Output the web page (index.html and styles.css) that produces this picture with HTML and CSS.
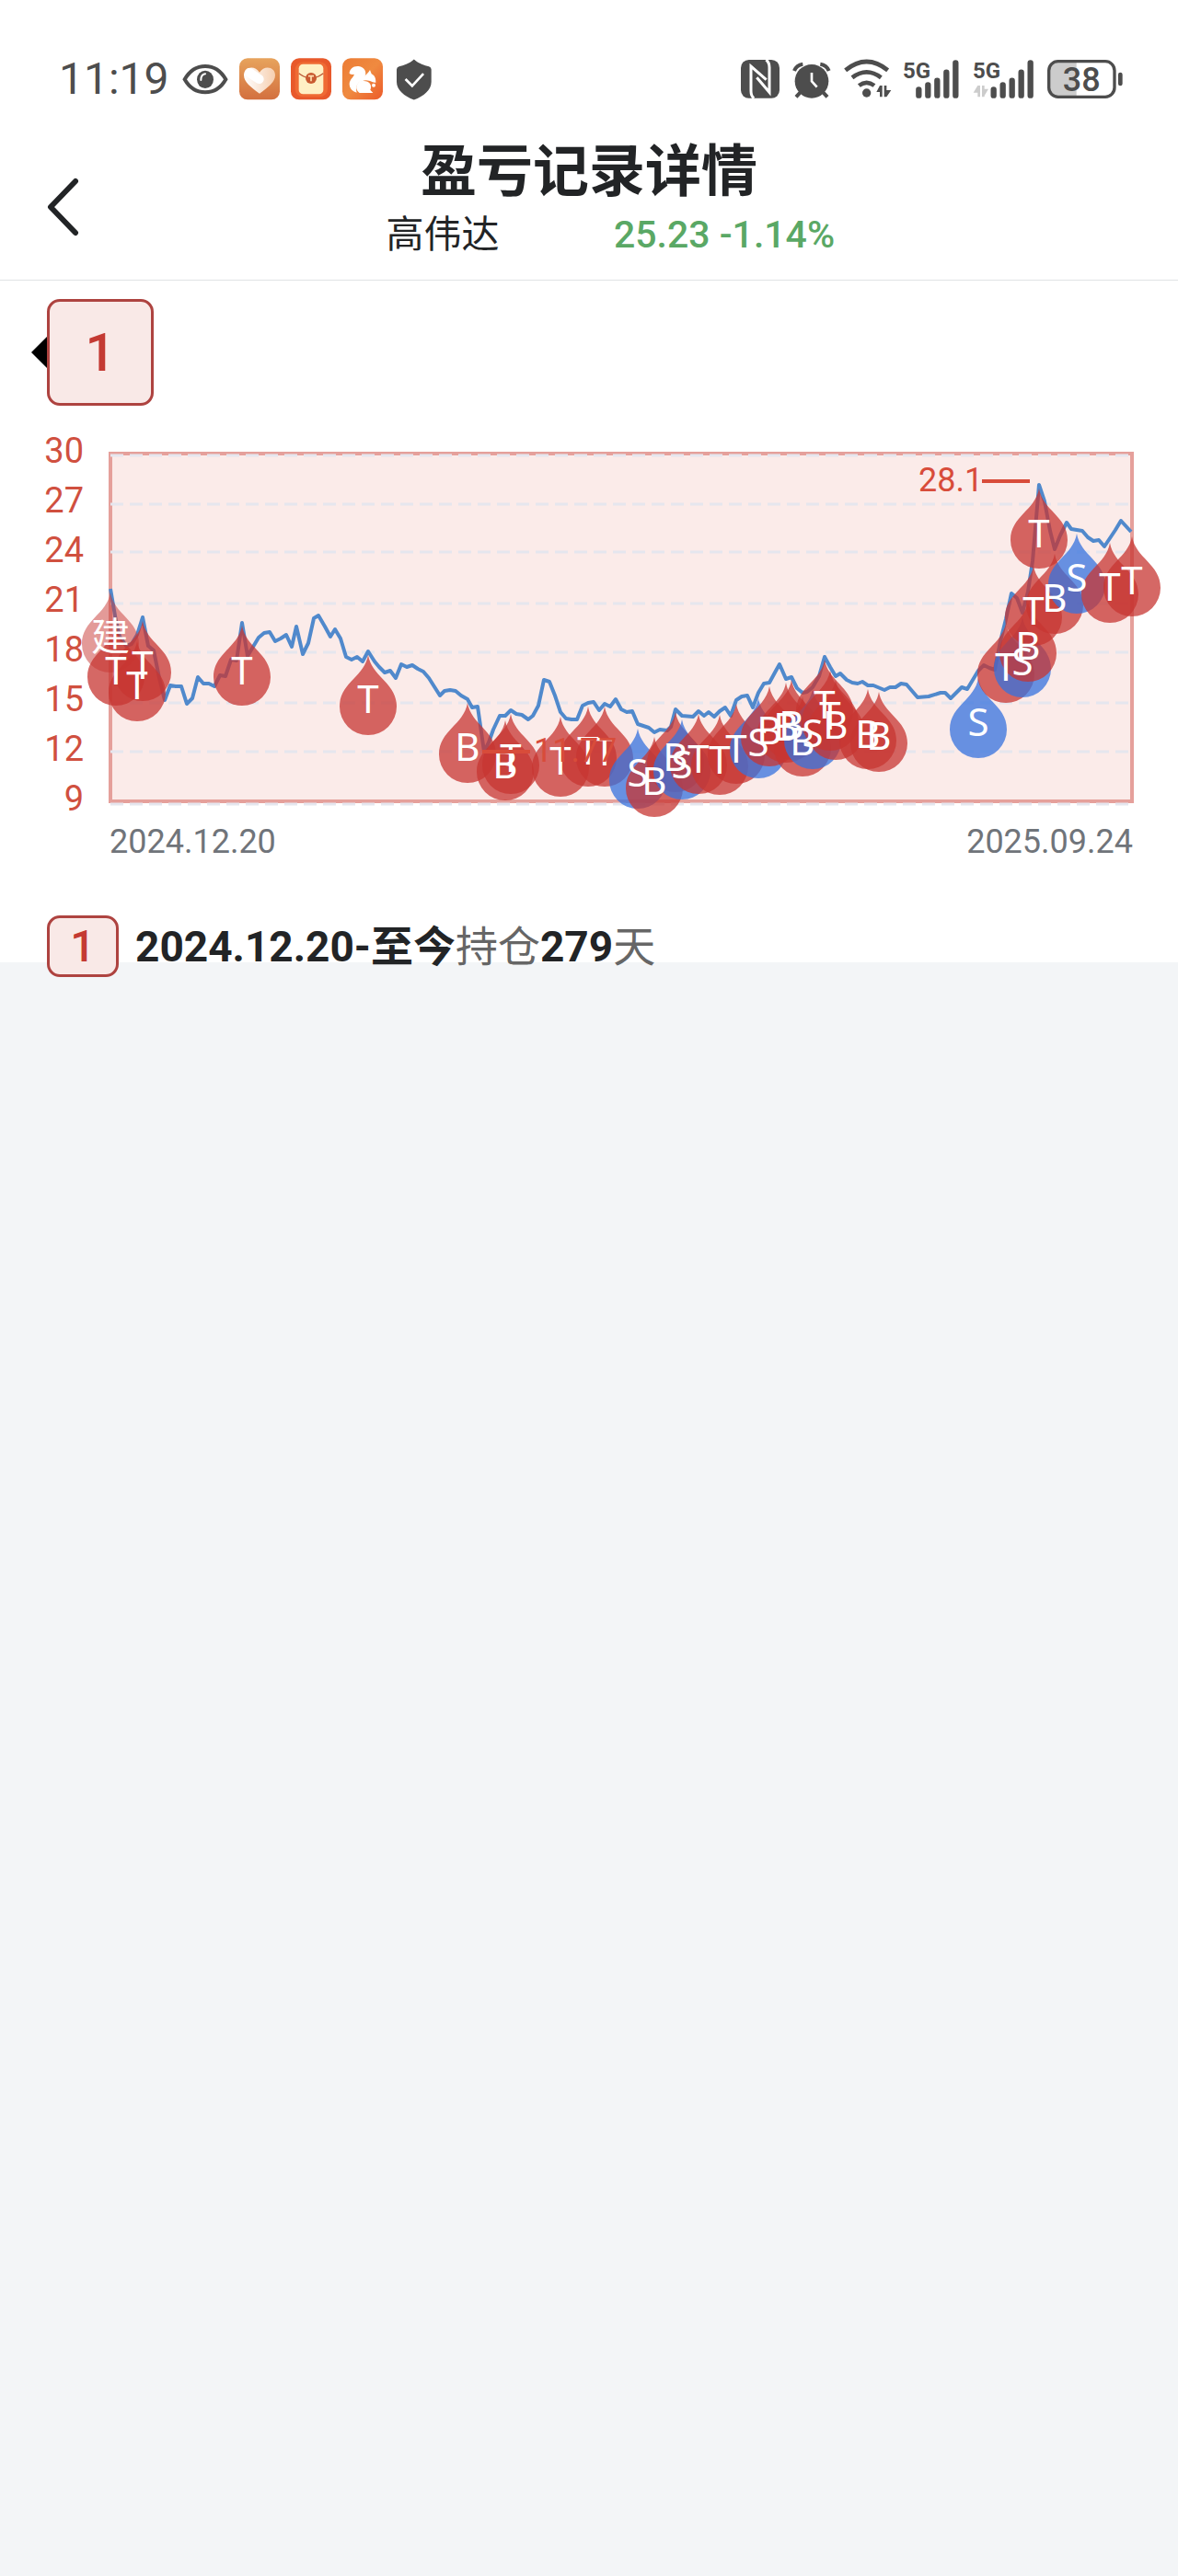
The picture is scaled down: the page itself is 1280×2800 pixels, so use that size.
FILE: index.html
```html
<!DOCTYPE html>
<html lang="zh-CN">
<head>
  <meta charset="UTF-8">
  <meta name="viewport" content="width=device-width, initial-scale=1.0">
  <title>盈亏记录详情</title>
  <link rel="stylesheet" href="styles.css">
</head>
<body>
  <div class="status-bar">
    <div class="status-left">
      <span class="clock">11:19</span>
      <svg class="eye" width="50" height="34" viewBox="0 0 150 102">
        <path d="M8 52C25 22 48 9 75 9s50 13 67 43c-17 30-40 42-67 42S25 82 8 52z" fill="none" stroke="#4d4d4d" stroke-width="12"/>
        <ellipse cx="75" cy="52" rx="27" ry="29" fill="#4d4d4d"/>
        <path d="M61 54c0-13 5-19 14-20" fill="none" stroke="#fff" stroke-width="6" stroke-linecap="round"/>
      </svg>
      <svg width="44" height="46" viewBox="0 0 132 136">
        <defs>
          <linearGradient id="heartBg" x2="0" y2="1"><stop stop-color="#e7a35c"/><stop offset="1" stop-color="#d3703f"/></linearGradient>
          <linearGradient id="heartFill"><stop stop-color="#fff"/><stop offset="1" stop-color="#f6cfb0"/></linearGradient>
        </defs>
        <rect width="132" height="135" rx="27" fill="url(#heartBg)"/>
        <path d="M66 115C38 94 15 77 15 55c0-28 36-34 51-9 15-25 51-19 51 9 0 22-23 39-51 60z" fill="url(#heartFill)"/>
        <path d="M33 47l32 21" stroke="#fff" stroke-width="30" stroke-linecap="round"/>
      </svg>
      <svg width="44" height="46" viewBox="0 0 132 136">
        <rect width="132" height="135" rx="27" fill="#e8592b"/>
        <rect x="14" y="12" width="106" height="114" rx="26" fill="#ef6a34"/>
        <rect x="26" y="19" width="80" height="98" rx="14" fill="#fff0c4"/>
        <path d="M26 49q22 16 40 16t40-16" fill="none" stroke="#b95532" stroke-width="4"/>
        <circle cx="66" cy="65" r="18" fill="#c95a30"/>
        <path d="M57 58h18M66 58v17" stroke="#ffe0b0" stroke-width="5"/>
      </svg>
      <svg width="44" height="46" viewBox="0 0 132 136">
        <defs><linearGradient id="uc" y2="1"><stop stop-color="#ec7c35"/><stop offset=".5" stop-color="#ef8a40"/><stop offset="1" stop-color="#ec5a2a"/></linearGradient></defs>
        <rect width="132" height="135" rx="27" fill="url(#uc)"/>
        <path d="M23 50c0-16 14-26 30-24 20 3 28 20 20 34-8 13-28 21-28 38 0 6 1 9 2 14-15-3-24-15-24-28 0-15 13-21 16-32-5 2-11 1-16-2z" fill="#fff"/>
        <path d="M90 38l5 13c10 5 14 13 14 28-8 1-14-4-22-6-13-4-26 0-34 12 2-24 27-26 37-47z" fill="#fff"/>
        <path d="M69 74c20 0 29 15 22 29l9 10H56C37 99 46 74 69 74z" fill="#fff"/>
        <circle cx="102" cy="88" r="6" fill="#fff"/>
      </svg>
      <svg class="shield" width="38" height="45" viewBox="0 0 115 135">
        <path d="M57 1c17 15 34 20 49 23q8 2 8 10v41c0 27-25 47-57 59C25 122 0 102 0 75V34q0-8 8-10C23 21 40 16 57 1z" fill="#4d4d4d"/>
        <path d="M29 66l22 22 37-40" fill="none" stroke="#fff" stroke-width="8"/>
      </svg>
    </div>
    <div class="status-right">
      <svg width="42" height="42" viewBox="0 0 126 126">
        <rect width="126" height="125" rx="26" fill="#4d4d4d"/>
        <path d="M43 125Q33 119 33 102V21l50 44M82 0q11 8 11 25v81L52 58" fill="none" stroke="#fff" stroke-width="9"/>
      </svg>
      <svg width="42" height="42" viewBox="0 0 126 126">
        <g fill="none" stroke="#4d4d4d" stroke-width="12">
          <path d="M6 36Q13 17 34 14M119 36Q112 17 91 14M28 104l-16 17M98 104l16 17"/>
        </g>
        <circle cx="63" cy="70" r="55" fill="#4d4d4d"/>
        <path d="M63 42v28l17 19" fill="none" stroke="#fff" stroke-width="8"/>
      </svg>
      <svg width="50" height="42" viewBox="0 0 150 126">
        <g fill="none" stroke="#4d4d4d" stroke-width="14">
          <path d="M5 34Q74-22 143 34M27 58Q74 22 121 58M49 84Q74 65 99 84"/>
        </g>
        <circle cx="74" cy="108" r="14" fill="#4d4d4d"/>
        <path d="M117 84v37h8V84zM106 105l11-21v21zM131 84v37h8V84zM139 121V99h15z" fill="#4d4d4d"/>
      </svg>
      <svg width="62" height="42" viewBox="0 0 186 126">
        <text class="net" x="0" y="60">5G</text>
        <path d="M52 97v19M82 82v34M112 68v48M142 41v75M172 10v106" stroke="#4d4d4d" stroke-width="19" stroke-linecap="round"/>
      </svg>
      <svg width="67" height="42" viewBox="0 0 201 126">
        <text class="net" x="0" y="60">5G</text>
        <path d="M16 84v37h8V84zM2 107l14-23v23zM30 84v37h8V84zM38 117V95h13z" fill="#ccc"/>
        <path d="M68 97v19M98 82v34M128 68v48M158 41v75M188 10v106" stroke="#4d4d4d" stroke-width="19" stroke-linecap="round"/>
      </svg>
      <svg class="battery" width="84" height="42" viewBox="0 0 252 126">
        <path d="M30 4h65v117H30Q4 118 4 94V30Q4 6 30 4z" fill="#ccc"/>
        <rect x="5" y="5" width="214" height="116" rx="30" fill="none" stroke="#4d4d4d" stroke-width="10"/>
        <path d="M238 48v30" stroke="#4d4d4d" stroke-width="14" stroke-linecap="round"/>
        <text class="level" x="112" y="101">38</text>
      </svg>
    </div>
  </div>

  <header class="page-header">
    <button class="back" type="button" aria-label="返回">
      <svg width="36" height="64" viewBox="0 0 36 64"><path d="M32 4L5 32l27 28" fill="none" stroke="#222426" stroke-width="6" stroke-linecap="round" stroke-linejoin="round"/></svg>
    </button>
    <div class="heading">
      <h1>盈亏记录详情</h1>
      <div class="stock">
        <span>高伟达</span>
        <span class="price">25.23 -1.14%</span>
      </div>
    </div>
  </header>

  <main>
    <button class="tab" type="button">1</button>

    <svg class="chart" viewBox="0 460 1280 490" role="img" aria-label="2024.12.20 - 2025.09.24">
      <defs>
        <path id="pin" d="M0-56C4-32 31-26 31 0A31 31 0 0 1-31 0C-31-26-4-32 0-56z"/>
      </defs>
      <rect class="frame" x="120" y="493" width="1110" height="378"/>
      <path class="grid" d="M120 495H1228M120 548H1228M120 600H1228M120 656H1228M120 709H1228M120 764H1228M120 817H1228M120 874H1228"/>

      <g class="axis-y">
        <text x="91" y="503">30</text>
        <text x="91" y="557">27</text>
        <text x="91" y="611">24</text>
        <text x="91" y="665">21</text>
        <text x="91" y="719">18</text>
        <text x="91" y="773">15</text>
        <text x="91" y="827">12</text>
        <text x="91" y="881">9</text>
      </g>
      <g class="axis-x">
        <text x="119" y="927">2024.12.20</text>
        <text class="end" x="1231" y="927">2025.09.24</text>
      </g>

      <polyline class="line" points="120,640 126,675 130,692 137,702 143,700 149,690 155,671 161,702 167,707 173,737 179,761 185,745 191,746 197,746 203,765 209,759 215,736 221,743 227,743 233,746 239,734 245,735 251,717 257,718 263,677 269,713 275,703 281,693 287,688 293,687 299,697 305,694 311,690 317,703 322,681 329,711 335,699 341,672 346,669 353,681 359,692 364,684 370,694 376,714 382,717 388,714 394,719 400,708 407,719 412,725 418,731 424,729 430,737 436,722 442,725 448,723 454,727 460,730 466,737 478,756 483,751 489,750 495,751 501,756 508,760 513,769 519,768 526,817 531,807 536,793 543,778 549,778 555,772 561,776 567,777 574,782 579,778 585,767 591,739 597,741 603,756 609,774 615,781 621,782 627,782 633,767 639,764 645,763 651,772 657,765 663,768 669,760 675,771 681,774 687,773 693,787 699,789 705,791 711,796 717,793 725,794 729,790 734,771 741,778 753,779 759,773 765,778 770,774 776,779 782,773 788,769 794,778 800,761 806,757 812,756 818,769 824,753 830,743 836,742 842,731 847,722 854,738 860,736 866,748 872,753 877,752 883,747 890,735 896,714 902,725 908,735 913,732 920,739 926,742 932,743 937,741 943,745 949,745 961,750 967,747 973,747 979,743 985,744 997,758 1009,757 1022,753 1027,753 1033,759 1039,753 1045,747 1051,749 1057,739 1063,729 1069,723 1075,726 1081,728 1087,697 1093,673 1099,645 1105,650 1111,666 1117,643 1122,610 1129,527 1135,545 1141,577 1146,597 1152,582 1159,568 1164,575 1176,577 1182,584 1188,588 1194,587 1200,594 1206,585 1212,576 1218,566 1229,578"/>

      <!-- trade markers -->
      <g class="pins">
        <use class="open" href="#pin" x="120" y="700"/>
        <use href="#pin" x="126" y="736"/>
        <use href="#pin" x="149" y="753"/>
        <use href="#pin" x="155" y="731"/>
        <use href="#pin" x="263" y="736"/>
        <use href="#pin" x="400" y="768"/>
        <use href="#pin" x="508" y="820"/>
        <use href="#pin" x="549" y="839"/>
        <use href="#pin" x="555" y="832"/>
        <use href="#pin" x="609" y="835"/>
        <use href="#pin" x="639" y="824"/>
        <use href="#pin" x="657" y="824"/>
        <use class="sell" href="#pin" x="693" y="848"/>
        <use href="#pin" x="711" y="857"/>
        <use href="#pin" x="734" y="830"/>
        <use class="sell" href="#pin" x="741" y="838"/>
        <use href="#pin" x="759" y="832"/>
        <use href="#pin" x="782" y="833"/>
        <use href="#pin" x="800" y="821"/>
        <use class="sell" href="#pin" x="824" y="815"/>
        <use href="#pin" x="836" y="802"/>
        <use href="#pin" x="854" y="798"/>
        <use href="#pin" x="860" y="795"/>
        <use href="#pin" x="872" y="813"/>
        <use class="sell" href="#pin" x="883" y="805"/>
        <use href="#pin" x="896" y="773"/>
        <use href="#pin" x="902" y="785"/>
        <use href="#pin" x="908" y="795"/>
        <use href="#pin" x="943" y="805"/>
        <use href="#pin" x="955" y="808"/>
        <use class="sell" href="#pin" x="1063" y="793"/>
        <use href="#pin" x="1093" y="733"/>
        <use class="sell" href="#pin" x="1111" y="727"/>
        <use href="#pin" x="1117" y="710"/>
        <use href="#pin" x="1123" y="671"/>
        <use href="#pin" x="1129" y="587"/>
        <use href="#pin" x="1146" y="658"/>
        <use class="sell" href="#pin" x="1170" y="636"/>
        <use href="#pin" x="1206" y="646"/>
        <use href="#pin" x="1230" y="639"/>
      </g>
      <g class="pin-text">
        <text x="120" y="707">建</text>
        <text x="126" y="744">T</text>
        <text x="149" y="760">T</text>
        <text x="155" y="738">T</text>
        <text x="263" y="744">T</text>
        <text x="400" y="775">T</text>
        <text x="508" y="827">B</text>
        <text x="549" y="846">B</text>
        <text x="555" y="839">T</text>
        <text x="609" y="842">T</text>
        <text x="639" y="831">T</text>
        <text x="657" y="832">T</text>
        <text x="693" y="855">S</text>
        <text x="711" y="864">B</text>
        <text x="734" y="838">B</text>
        <text x="741" y="846">S</text>
        <text x="759" y="840">T</text>
        <text x="782" y="841">T</text>
        <text x="800" y="829">T</text>
        <text x="824" y="822">S</text>
        <text x="836" y="809">B</text>
        <text x="854" y="805">B</text>
        <text x="860" y="803">B</text>
        <text x="872" y="821">B</text>
        <text x="883" y="812">S</text>
        <text x="896" y="781">T</text>
        <text x="902" y="793">T</text>
        <text x="908" y="803">B</text>
        <text x="943" y="813">B</text>
        <text x="955" y="815">B</text>
        <text x="1063" y="800">S</text>
        <text x="1093" y="740">T</text>
        <text x="1111" y="734">S</text>
        <text x="1117" y="717">B</text>
        <text x="1123" y="679">T</text>
        <text x="1129" y="595">T</text>
        <text x="1146" y="665">B</text>
        <text x="1170" y="643">S</text>
        <text x="1206" y="653">T</text>
        <text x="1230" y="646">T</text>
      </g>

      <!-- highest and lowest price -->
      <g class="extreme">
        <path d="M1067 523H1119M524 817H576"/>
        <text x="998" y="534">28.1</text>
        <text x="580" y="828">11.77</text>
      </g>
    </svg>

    <div class="record">
      <span class="badge">1</span>
      <p><b>2024.12.20-至今</b>持仓<b>279</b>天</p>
    </div>
  </main>
</body>
</html>
```
FILE: styles.css
```css
body {
  min-height: 100vh;
  margin: 0;
  background: #f3f5f7;
  color: #222426;
  font-family: Roboto, "Noto Sans CJK SC", sans-serif;
}

button {
  padding: 0;
  border: none;
  background: none;
  font-family: inherit;
  cursor: pointer;
}

svg {
  display: block;
  flex: none;
  overflow: visible;
}

/* Phone status bar */
.status-bar {
  display: flex;
  justify-content: space-between;
  align-items: center;
  height: 144px;
  padding: 28px 58px 0 64px;
  box-sizing: border-box;
  background: #fff;
}

.status-left,
.status-right {
  display: flex;
  align-items: center;
}

.status-left {
  gap: 12px;
}

.status-right {
  gap: 14px;
}

.clock {
  color: #4d4d4d;
  font-size: 48px;
  line-height: 56px;
}

.eye {
  margin-left: 2px;
}

.shield {
  margin-left: 3px;
}

.net {
  fill: #4d4d4d;
  font-family: "Liberation Sans Narrow", Roboto, sans-serif;
  font-size: 72px;
  font-weight: bold;
}

.level {
  fill: #4d4d4d;
  font-size: 108px;
  font-weight: 500;
  text-anchor: middle;
}

/* Title bar */
.page-header {
  display: grid;
  grid-template-columns: 120px 1fr 120px;
  align-items: center;
  height: 160px;
  border-bottom: 1px solid #e0e3e5;
  background: #fff;
}

.back {
  margin-top: 2px;
  padding-left: 50px;
}

.heading {
  padding-bottom: 14px;
  text-align: center;
}

h1 {
  margin: 0;
  font-size: 61px;
  line-height: 76px;
  font-weight: bold;
}

.stock {
  display: grid;
  grid-template-columns: 306px 306px;
  justify-content: center;
  padding-right: 12px;
  font-size: 41px;
  line-height: 60px;
}

.price {
  color: #5aa865;
  font-weight: 500;
}

/* Content */
main {
  display: flow-root;
  background: #fff;
}

.tab,
.badge {
  box-sizing: border-box;
  border: 3px solid #ae4340;
  background: #f9e9e7;
  color: #c43a33;
  font-weight: 500;
  text-align: center;
}

.tab {
  display: block;
  position: relative;
  width: 116px;
  height: 116px;
  margin: 20px 0 0 51px;
  border-radius: 14px;
  font-size: 58px;
}

.tab::before {
  content: "";
  position: absolute;
  top: 38px;
  left: -20px;
  border: 17px solid transparent;
  border-left-width: 0;
  border-right-color: #000;
}

/* Price chart */
.chart {
  width: 100%;
  margin-top: 19px;
  font-size: 36px;
}

.frame {
  fill: #fbebe9;
  stroke: #e5a09b;
  stroke-width: 4;
}

.grid {
  stroke: #e5e6ee;
  stroke-width: 3;
  stroke-dasharray: 14 7;
}

.axis-y {
  fill: #d0503f;
  font-size: 38px;
  text-anchor: end;
}

.axis-x {
  fill: #70747a;
}

.axis-x .end {
  text-anchor: end;
}

.line {
  fill: none;
  stroke: #5089cc;
  stroke-width: 4;
  stroke-linejoin: round;
}

.pins use {
  fill: #c73531;
  opacity: 0.75;
}

.pins .sell {
  fill: #3572dd;
}

.pins .open {
  opacity: 0.5;
}

.pin-text {
  fill: #fff;
  font-family: "Noto Sans", "Noto Sans CJK SC", sans-serif;
  font-size: 42px;
  text-anchor: middle;
}

.extreme {
  fill: #d84c3a;
  stroke: none;
}

.extreme path {
  stroke: #d84c3a;
  stroke-width: 4;
}

/* Holding period */
.record {
  display: flex;
  align-items: center;
  gap: 18px;
  margin: 45px 51px -16px;
}

.badge {
  width: 78px;
  height: 67px;
  border-radius: 14px;
  font-size: 48px;
  line-height: 62px;
}

.record p {
  margin: 0;
  color: #666;
  font-size: 46px;
  line-height: 66px;
}

.record b {
  color: #222426;
  font-weight: bold;
}
```
